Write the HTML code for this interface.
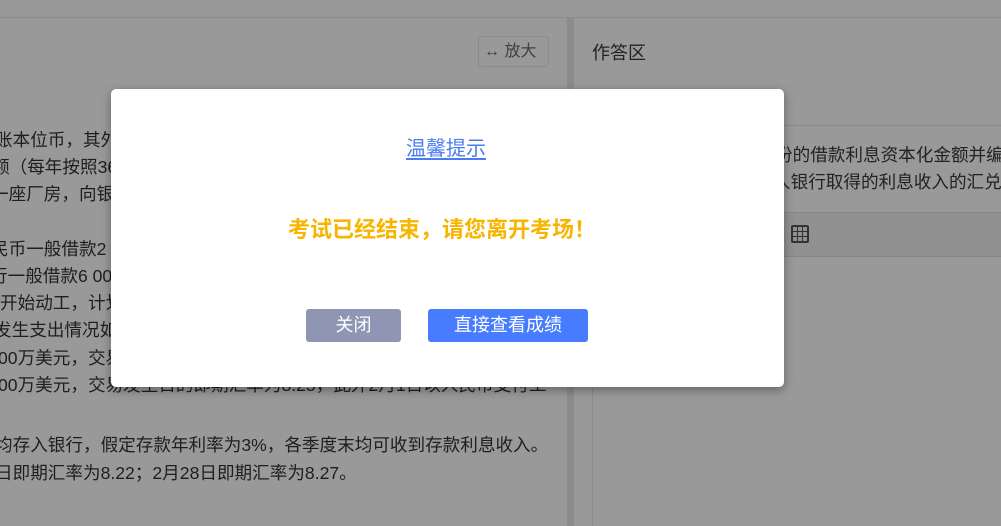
<!DOCTYPE html>
<html><head><meta charset="utf-8"><style>
*{margin:0;padding:0;box-sizing:border-box}
body{width:1001px;height:526px;overflow:hidden;background:#999;font-family:"Liberation Sans","Noto Sans CJK SC",sans-serif;position:relative;color:#1a1a1a}
.abs{position:absolute;white-space:nowrap}
.lt{font-size:17.6px;left:0;color:#1e1e1e}
</style></head><body>
<div class="abs" style="left:0;top:17px;width:1001px;height:1px;background:#8a8a8a"></div>
<div class="abs" style="left:567px;top:18px;width:7px;height:508px;background:#8c8c8c"></div>
<div class="abs" style="left:478px;top:36px;width:71px;height:31px;border:1px solid #8c8c8c;border-radius:4px;font-size:16px;color:#404040;line-height:29px;padding-left:5px">↔ 放大</div>
<div class="abs" style="left:592px;top:39px;font-size:18px;color:#222">作答区</div>
<div class="abs lt" style="top:127px;left:-5px">账本位币，其外</div>
<div class="abs lt" style="top:154px;left:-8px">额（每年按照360</div>
<div class="abs lt" style="top:181px;left:-9px">一座厂房，向银行</div>
<div class="abs lt" style="top:236px;left:-9px">民币一般借款2 000</div>
<div class="abs lt" style="top:263px;left:-10px">行一般借款6 000</div>
<div class="abs lt" style="top:290px;left:0">开始动工，计划</div>
<div class="abs lt" style="top:317px;left:-6px">发生支出情况如下</div>
<div class="abs lt" style="top:345px;left:-2px">00万美元，交易发生</div>
<div class="abs lt" style="top:372px;left:-2px">00万美元，交易发生日的即期汇率为8.25，此外2月1日以人民币支付工</div>
<div class="abs lt" style="top:432px;left:-5px">均存入银行，假定存款年利率为3%，各季度末均可收到存款利息收入。</div>
<div class="abs lt" style="top:460px;left:-5px">日即期汇率为8.22；2月28日即期汇率为8.27。</div>
<div class="abs" style="left:592px;top:125px;width:409px;height:1px;background:#8a8a8a"></div>
<div class="abs" style="left:775px;top:142px;font-size:17.6px;color:#222">份的借款利息资本化金额并编</div>
<div class="abs" style="left:773px;top:169px;font-size:17.6px;color:#222">人银行取得的利息收入的汇兑</div>
<div class="abs" style="left:592px;top:212px;width:409px;height:45px;background:#919191;border-top:1px solid #868686;border-bottom:1px solid #868686"></div>
<svg class="abs" style="left:790px;top:224px" width="20" height="20" viewBox="0 0 20 20"><rect x="1" y="1" width="18" height="18" rx="2" fill="#333"/><g fill="#8f8f8f"><rect x="3" y="3" width="4" height="4"/><rect x="8" y="3" width="4" height="4"/><rect x="13" y="3" width="4" height="4"/><rect x="3" y="8" width="4" height="4"/><rect x="8" y="8" width="4" height="4"/><rect x="13" y="8" width="4" height="4"/><rect x="3" y="13" width="4" height="4"/><rect x="8" y="13" width="4" height="4"/><rect x="13" y="13" width="4" height="4"/></g></svg>
<div class="abs" style="left:592px;top:257px;width:1px;height:269px;background:#8a8a8a"></div>
<div class="abs" style="left:111px;top:89px;width:673px;height:298px;background:#fff;border-radius:5px;box-shadow:0 3px 10px rgba(0,0,0,.35)">
<div class="abs" style="left:0;width:670px;text-align:center;top:43px;font-size:20px;color:#4a7cf0;text-decoration:underline;text-underline-offset:3px">温馨提示</div>
<div class="abs" style="left:0;width:662px;text-align:center;top:123px;font-size:22px;font-weight:bold;color:#f7b500">考试已经结束，请您离开考场！</div>
<div class="abs" style="left:195px;top:220px;width:95px;height:33px;background:#8e96b3;border-radius:3px;color:#fff;font-size:18px;text-align:center;line-height:33px">关闭</div>
<div class="abs" style="left:317px;top:220px;width:160px;height:33px;background:#477cff;border-radius:3px;color:#fff;font-size:18px;text-align:center;line-height:33px">直接查看成绩</div>
</div>
</body></html>
